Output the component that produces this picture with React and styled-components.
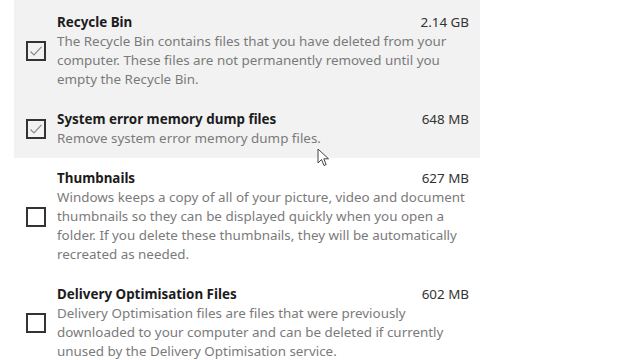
import styled, { createGlobalStyle } from "styled-components";

const ITEMS = [
  {
    title: "Recycle Bin",
    size: "2.14 GB",
    checked: true,
    text: [
      "The Recycle Bin contains files that you have deleted from your",
      "computer. These files are not permanently removed until you",
      "empty the Recycle Bin.",
    ],
  },
  {
    title: "System error memory dump files",
    size: "648 MB",
    checked: true,
    text: ["Remove system error memory dump files."],
  },
  {
    title: "Thumbnails",
    size: "627 MB",
    checked: false,
    text: [
      "Windows keeps a copy of all of your picture, video and document",
      "thumbnails so they can be displayed quickly when you open a",
      "folder. If you delete these thumbnails, they will be automatically",
      "recreated as needed.",
    ],
  },
  {
    title: "Delivery Optimisation Files",
    size: "602 MB",
    checked: false,
    text: [
      "Delivery Optimisation files are files that were previously",
      "downloaded to your computer and can be deleted if currently",
      "unused by the Delivery Optimisation service.",
    ],
  },
];

const GlobalStyle = createGlobalStyle`
  html, body {
    margin: 0;
    padding: 0;
    background: #ffffff;
    overflow: hidden;
  }
  body {
    font-family: "Noto Sans", "Open Sans", sans-serif;
  }
`;

const Page = styled.div`
  position: relative;
  width: 640px;
  height: 360px;
  overflow: hidden;
  background: #ffffff;
`;

const List = styled.div`
  display: flex;
  flex-direction: column;
  width: 466px;
  margin-left: 14px;
  padding-top: 2px;
`;

const Group = styled.div`
  display: flex;
  flex-direction: column;
  margin-top: ${({ $selected }) => ($selected ? "-2px" : "0")};
  padding-top: ${({ $selected }) => ($selected ? "2px" : "0")};
  background: ${({ $selected }) => ($selected ? "#f2f2f2" : "transparent")};
`;

const Row = styled.div`
  display: flex;
  align-items: center;
  gap: 11px;
  padding: 11px 11px 10px 12px;
`;

const Box = styled.span`
  display: grid;
  place-items: center;
  width: 16px;
  height: 16px;
  border: 2px solid #333333;
  flex-shrink: 0;
  color: #888888;
`;

const Body = styled.div`
  flex: 1;
  min-width: 0;
  font-size: 13.4px;
  line-height: 19px;
`;

const Head = styled.div`
  display: flex;
  justify-content: space-between;
  align-items: baseline;
`;

const Title = styled.span`
  font-weight: 700;
  color: #1c1c1c;
`;

const Size = styled.span`
  color: #333333;
`;

const Desc = styled.div`
  color: #7a7a7a;
  white-space: nowrap;
`;

const Cursor = styled.svg`
  position: absolute;
  left: 317px;
  top: 148px;
`;

const Check = () => (
  <svg width="16" height="16" viewBox="0 0 16 16" fill="none">
    <path d="M2.5 8.5 L6 12 L13.5 3.8" stroke="currentColor" strokeWidth="1.2" />
  </svg>
);

const Item = ({ item }) => (
  <Row>
    <Box>{item.checked ? <Check /> : null}</Box>
    <Body>
      <Head>
        <Title>{item.title}</Title>
        <Size>{item.size}</Size>
      </Head>
      {item.text.map((line) => (
        <Desc key={line}>{line}</Desc>
      ))}
    </Body>
  </Row>
);

export default function App() {
  return (
    <Page>
      <GlobalStyle />
      <List>
        <Group $selected>
          <Item item={ITEMS[0]} />
          <Item item={ITEMS[1]} />
        </Group>
        <Group>
          <Item item={ITEMS[2]} />
          <Item item={ITEMS[3]} />
        </Group>
      </List>
      <Cursor width="14" height="20" viewBox="0 0 14 20">
        <path
          d="M1 1 L1 15 L4.5 11.5 L7 17.5 L9.2 16.6 L6.8 10.8 L11.5 10.8 Z"
          fill="#ffffff"
          stroke="#444444"
          strokeWidth="1"
          strokeLinejoin="round"
        />
      </Cursor>
    </Page>
  );
}
